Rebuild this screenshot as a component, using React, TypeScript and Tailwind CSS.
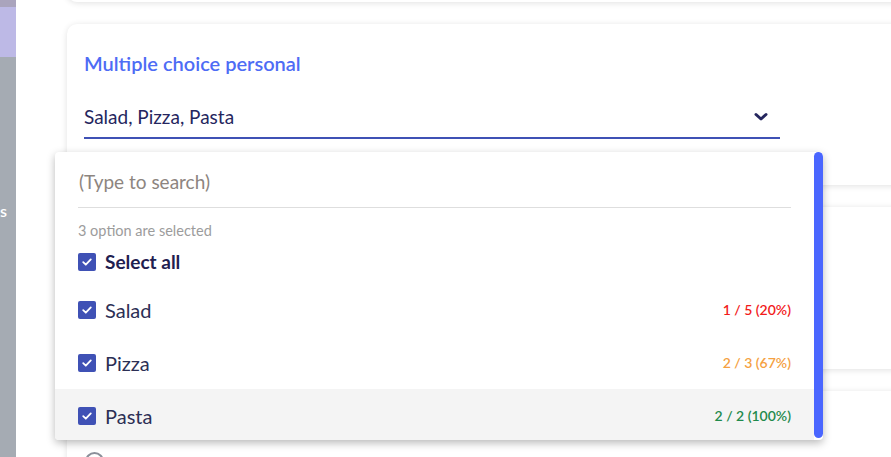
import React from 'react';

type Option = { label: string; stat: string; color: string; active?: boolean };

const options: Option[] = [
  { label: 'Salad', stat: '1 / 5 (20%)', color: 'text-[#f21b1b]' },
  { label: 'Pizza', stat: '2 / 3 (67%)', color: 'text-[#f5a142]' },
  { label: 'Pasta', stat: '2 / 2 (100%)', color: 'text-[#1f8a4c]', active: true },
];

const Checkbox = () => (
  <span className="flex h-[18px] w-[18px] shrink-0 items-center justify-center rounded-[2px] bg-[#3f51b5]">
    <svg width="12" height="12" viewBox="0 0 12 12" fill="none">
      <path d="M2.2 6.2 L4.8 8.7 L9.8 3.4" stroke="white" strokeWidth="1.8" strokeLinecap="round" strokeLinejoin="round" />
    </svg>
  </span>
);

const App = () => {
  return (
    <div
      className="relative flex h-[457px] w-[891px] overflow-hidden bg-white"
      style={{ fontFamily: 'Lato, "Noto Sans", sans-serif' }}
    >
      {/* dimmed sidebar edge */}
      <aside className="flex w-[16px] shrink-0 flex-col bg-[#a5abb3]">
        <div className="h-[7px] bg-[#aaa4bd]" />
        <div className="h-[50px] bg-[#bdb9e6]" />
        <div className="mt-[144px] h-[20px] text-[16px] font-semibold leading-[20px] text-white">s</div>
      </aside>

      {/* question cards */}
      <main className="flex flex-1 flex-col gap-[22px] pl-[51px] mt-[-100px]">
        <section className="h-[102px] w-[900px] shrink-0 rounded-[10px] bg-white shadow-[0_1px_6px_rgba(0,0,0,0.12)]" />

        <section className="h-[161px] w-[900px] shrink-0 rounded-[10px] bg-white pl-[17px] pt-[26px] shadow-[0_1px_6px_rgba(0,0,0,0.12)]">
          <h2 className="text-[20px] font-semibold leading-[26px] text-[#4e6cf5]">Multiple choice personal</h2>
          <div className="mt-[27px] flex h-[36px] w-[696px] items-center justify-between border-b-2 border-[#3f51b5] pr-[12px] pb-[6px]">
            <span className="text-[19px] leading-[24px] text-[#25265e]">Salad, Pizza, Pasta</span>
            <svg width="14" height="10" viewBox="0 0 14 10" fill="none">
              <path d="M2 2.5 L7 7 L12 2.5" stroke="#25265e" strokeWidth="3" strokeLinecap="round" strokeLinejoin="round" />
            </svg>
          </div>
        </section>

        <section className="h-[162px] w-[900px] shrink-0 rounded-[10px] bg-white shadow-[0_1px_6px_rgba(0,0,0,0.12)]" />

        <section className="h-[162px] w-[900px] shrink-0 rounded-[10px] bg-white pl-[18px] pt-[61px] shadow-[0_1px_6px_rgba(0,0,0,0.12)]">
          <span className="block h-[19px] w-[19px] rounded-full border-2 border-[#8a8f99]" />
        </section>
      </main>

      {/* open dropdown */}
      <div className="absolute left-[55px] top-[152px] h-[288px] w-[768px] overflow-hidden rounded-[4px] bg-white shadow-[0_3px_9px_rgba(0,0,0,0.28)]">
        <div className="mr-[9px]">
          <div className="mx-[23px] flex h-[56px] items-center border-b border-[#dedede] pt-[6px]">
            <span className="pl-[1px] text-[19px] text-[#8d8580]">(Type to search)</span>
          </div>
          <div className="mx-[23px] mt-[13px] text-[14.5px] leading-[20px] text-[#9c9c9c]">3 option are selected</div>
          <div className="mx-[23px] flex h-[42px] items-center gap-[9px]">
            <Checkbox />
            <span className="text-[19px] font-bold text-[#1f2050]">Select all</span>
          </div>
          {options.map(o => (
            <div
              key={o.label}
              className={`flex h-[53px] items-center justify-between px-[23px] ${o.active ? 'bg-[#f4f4f4]' : ''}`}
            >
              <div className="flex items-center gap-[9px]">
                <Checkbox />
                <span className="text-[20px] text-[#2c2f55]">{o.label}</span>
              </div>
              <span className={`text-[14px] font-semibold ${o.color}`}>{o.stat}</span>
            </div>
          ))}
        </div>
        <div className="absolute right-0 top-0 bottom-[2px] w-[9px] rounded-full bg-[#4a66ff]" />
      </div>
    </div>
  );
};

export default App;
